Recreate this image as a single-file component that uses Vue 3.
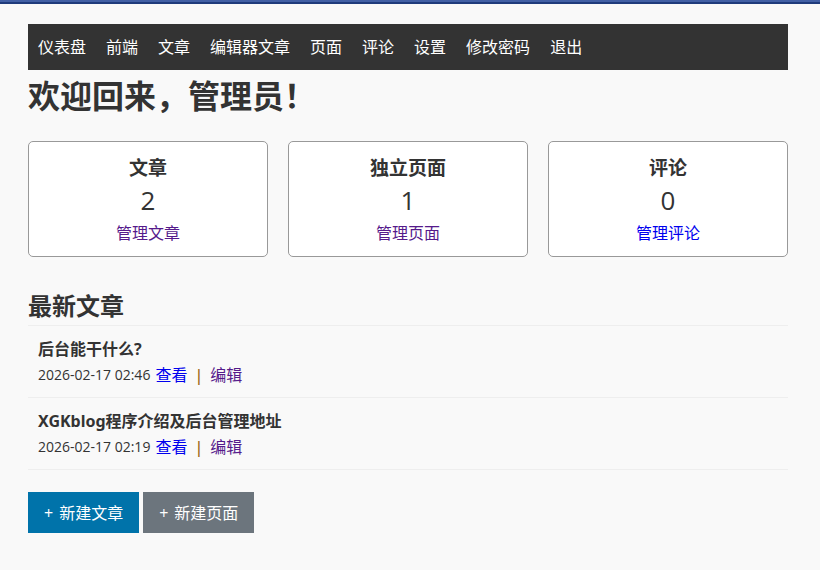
<script setup>
const navItems = ['仪表盘', '前端', '文章', '编辑器文章', '页面', '评论', '设置', '修改密码', '退出']

const stats = [
  { title: '文章', count: 2, link: '管理文章', visited: true },
  { title: '独立页面', count: 1, link: '管理页面', visited: true },
  { title: '评论', count: 0, link: '管理评论', visited: false },
]

const posts = [
  { title: '后台能干什么?', date: '2026-02-17 02:46' },
  { title: 'XGKblog程序介绍及后台管理地址', date: '2026-02-17 02:19' },
]

const actions = [
  { label: '新建文章', kind: 'primary' },
  { label: '新建页面', kind: 'secondary' },
]
</script>

<template>
  <div class="page">
    <div class="top-strip"></div>
    <div class="container">
      <nav class="nav">
        <a v-for="item in navItems" :key="item" href="#">{{ item }}</a>
      </nav>

      <main>
        <h1>欢迎回来，管理员！</h1>

        <section class="stats">
          <div v-for="stat in stats" :key="stat.title" class="card">
            <h3>{{ stat.title }}</h3>
            <p class="count">{{ stat.count }}</p>
            <a href="#" class="link" :class="{ visited: stat.visited }">{{ stat.link }}</a>
          </div>
        </section>

        <h2>最新文章</h2>
        <ul class="posts">
          <li v-for="post in posts" :key="post.title">
            <strong>{{ post.title }}</strong>
            <div class="meta">
              <time>{{ post.date }}</time>
              <a href="#" class="link">查看</a>
              <span class="divider">|</span>
              <a href="#" class="link visited">编辑</a>
            </div>
          </li>
        </ul>

        <div class="actions">
          <a v-for="action in actions" :key="action.label" href="#" class="btn" :class="action.kind">
            <span>+</span>
            <span>{{ action.label }}</span>
          </a>
        </div>
      </main>
    </div>
  </div>
</template>

<style>
body {
  margin: 0;
  background: #f9f9f9;
}
</style>

<style scoped>
.page {
  font-family: "Open Sans", "Noto Sans CJK SC", sans-serif;
  font-size: 16px;
  line-height: 26px;
  color: #333;
}

.top-strip {
  height: 2px;
  background: #4260a5;
  border-bottom: 2px solid #1f3b7c;
}

.container {
  padding: 20px 32px 20px 28px;
}

.nav {
  display: flex;
  flex-wrap: wrap;
  gap: 0 20px;
  padding: 10px;
  background: #333;
}

.nav a {
  color: #fff;
  text-decoration: none;
}

h1,
h2,
h3,
p {
  margin: 0;
}

h1 {
  font-size: 32px;
  line-height: 52px;
}

.stats {
  display: grid;
  grid-template-columns: repeat(3, 1fr);
  gap: 20px;
  margin: 19px 0 28px;
}

.card {
  display: flex;
  flex-direction: column;
  align-items: center;
  padding: 10px;
  background: #fff;
  border: 1px solid #999;
  border-radius: 5px;
}

h3 {
  font-size: 19px;
  line-height: 32px;
}

.count {
  margin-bottom: 4px;
  font-size: 26px;
  line-height: 32px;
}

.link {
  color: #00e;
  text-decoration: none;
}

.link.visited {
  color: #551a8b;
}

h2 {
  padding-top: 2px;
  font-size: 24px;
  line-height: 38px;
}

.posts {
  margin: 0;
  padding: 0;
  list-style: none;
  border-top: 1px solid #eee;
}

.posts li {
  padding: 10px 10px 9px;
  border-bottom: 1px solid #eee;
}

.posts strong {
  display: block;
  font-family: "Noto Sans", "Noto Sans CJK SC", sans-serif;
}

.meta {
  display: flex;
  align-items: center;
}

time {
  margin-right: 5px;
  font-size: 14px;
}

.divider {
  margin: 0 7px;
  color: #a06a20;
  font-weight: 600;
}

.actions {
  display: flex;
  flex-wrap: wrap;
  gap: 4px;
  margin-top: 22px;
}

.btn {
  display: flex;
  gap: 6px;
  padding: 8px 16px 7px;
  color: #fff;
  text-decoration: none;
}

.primary {
  background: #0073aa;
}

.secondary {
  background: #6c757d;
}
</style>
